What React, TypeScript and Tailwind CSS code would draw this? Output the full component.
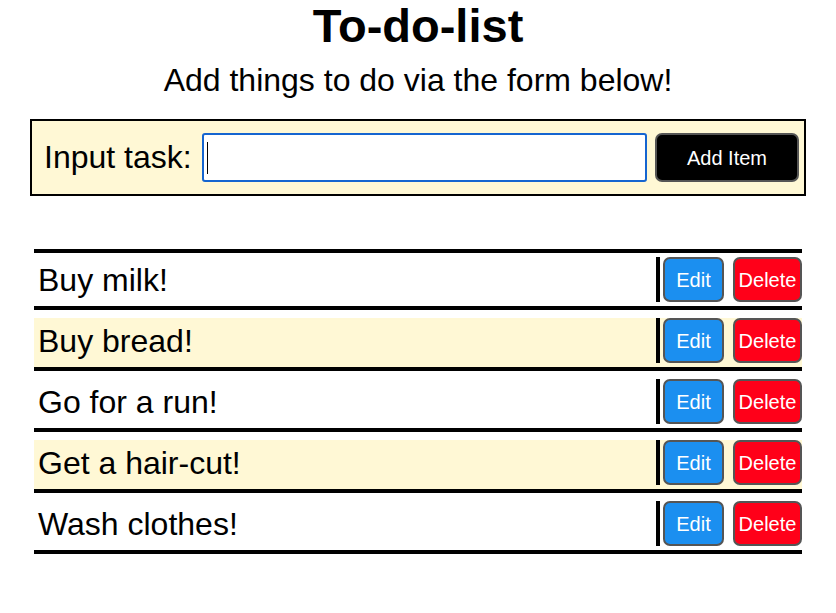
import React from "react";

const items = ["Buy milk!", "Buy bread!", "Go for a run!", "Get a hair-cut!", "Wash clothes!"];

export default function App() {
  return (
    <div
      className="w-[836px] min-h-[613px] bg-white text-black"
      style={{ fontFamily: '"Liberation Sans", Arial, Helvetica, sans-serif' }}
    >
      <h1 className="text-center text-[47px] font-bold leading-[52px]">To-do-list</h1>
      <p className="mt-[10px] text-center text-[32px] leading-[36px]">Add things to do via the form below!</p>

      <div className="mx-[30px] mt-[21px] flex h-[77px] items-center border-2 border-black bg-[#fff8d5] pl-[12px] pr-[5px]">
        <span className="text-[32px] leading-[37px]">Input task:</span>
        <div className="ml-[10px] flex h-[49px] flex-1 items-center rounded-[3px] border-2 border-[#1565d0] bg-white pl-[3px]">
          <div className="h-[32px] w-px bg-black" />
        </div>
        <button className="ml-[8px] flex h-[49px] w-[144px] items-center justify-center rounded-[7px] border-2 border-[#555555] bg-black text-[20px] text-white">
          Add Item
        </button>
      </div>

      <ul className="mx-[34px] mt-[53px] border-t-4 border-black">
        {items.map((t, i) => (
          <li
            key={t}
            className={`flex h-[53px] items-start border-b-4 border-black ${i === 0 ? "mt-[4px]" : "mt-[8px]"} ${
              i % 2 === 1 ? "bg-[#fff8d5]" : "bg-white"
            }`}
          >
            <span className="mt-[5px] flex-1 pl-[4px] text-[32px] leading-[37px]">{t}</span>
            <div className="flex h-[45px] gap-[9px] border-l-4 border-black pl-[3px]">
              <button className="flex h-[45px] w-[61px] items-center justify-center rounded-[7px] border-2 border-[#555555] bg-[#1b8ff0] text-[20px] text-white">
                Edit
              </button>
              <button className="flex h-[45px] w-[69px] items-center justify-center rounded-[7px] border-2 border-[#555555] bg-[#ff0019] text-[20px] text-white">
                Delete
              </button>
            </div>
          </li>
        ))}
      </ul>
    </div>
  );
}
